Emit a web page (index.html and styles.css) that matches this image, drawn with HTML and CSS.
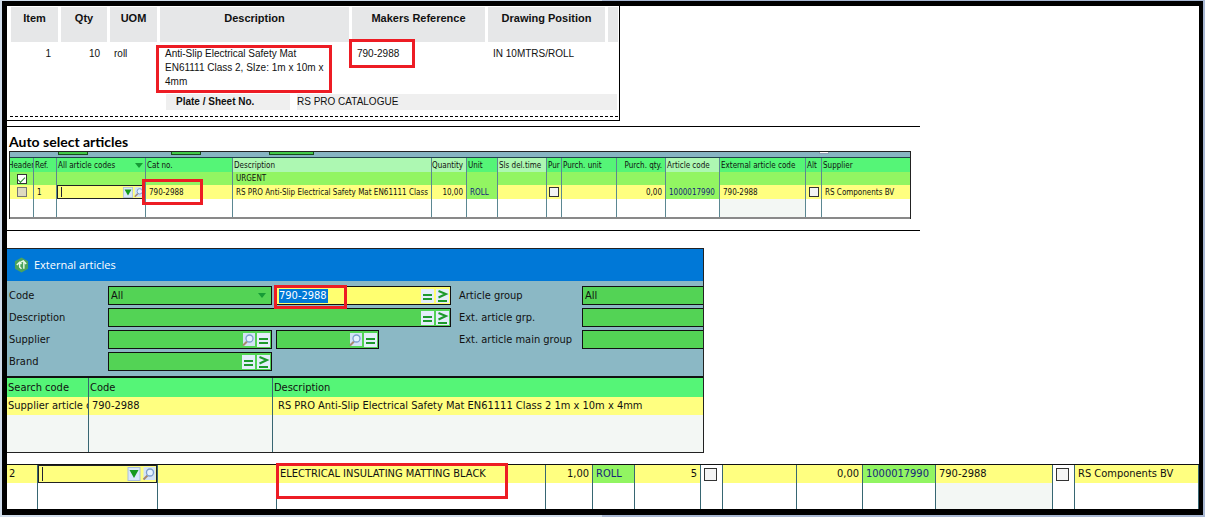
FILE: index.html
```html
<!DOCTYPE html>
<html lang="en">
<head>
<meta charset="utf-8">
<title>External articles</title>
<link rel="stylesheet" href="styles.css">
</head>
<body>
<svg class="defs" aria-hidden="true">
  <symbol id="lens" viewBox="0 0 13 14"><rect x="1" width="12" height="13" fill="#d3e3f7"/><path d="M1 12.500L5 8.500" stroke="#a8896f" stroke-width="2"/><circle cx="7.500" cy="5.500" r="3.500" fill="#e6f2ff" stroke="#7d9fce" stroke-width="1.300"/></symbol>
  <symbol id="eq" viewBox="0 0 13 14"><rect width="13" height="14" fill="#e4eefa"/><path d="M2 6H11M2 10H11" stroke="#1d9a2c" stroke-width="2"/></symbol>
  <symbol id="ge" viewBox="0 0 13 14"><rect width="13" height="14" fill="#e4eefa"/><path d="M2.500 2L10 5L2.500 8.500M2 12H11" fill="none" stroke="#1d9a2c" stroke-width="2"/></symbol>
  <symbol id="down" viewBox="0 0 13 14"><rect x=".5" y=".5" width="12" height="13" fill="#d9e8fa" stroke="#a9bfdc"/><path d="M2 3H11L6.500 11Z" fill="#149a1c"/></symbol>
</svg>
<main class="frame">
  <section class="doc">
    <table class="order">
      <colgroup><col class="o1"><col class="o2"><col class="o3"><col class="o4"><col class="o5"><col class="o6"><col></colgroup>
      <thead><tr><th>Item</th><th>Qty</th><th>UOM</th><th>Description</th><th>Makers Reference</th><th>Drawing Position</th><th></th></tr></thead>
      <tbody><tr><td class="num">1</td><td class="num">10</td><td>roll</td>
        <td>Anti-Slip Electrical Safety Mat<br>EN61111 Class 2, SIze: 1m x 10m x<br>4mm<i class="mark mark-desc"></i></td>
        <td>790-2988<i class="mark mark-ref"></i></td><td>IN 10MTRS/ROLL</td><td></td></tr></tbody>
    </table>
    <div class="plate"><b>Plate / Sheet No.</b><span>RS PRO CATALOGUE</span></div>
  </section>

  <section class="auto">
    <h1>Auto select articles</h1>
    <div class="grid-box">
      <div class="strip"><i></i><i></i><i></i><i></i></div>
      <table class="grid small">
        <colgroup><col class="a1"><col class="a2"><col class="a3"><col class="a4"><col class="a5"><col class="a6"><col class="a7"><col class="a8"><col class="a9"><col class="a10"><col class="a11"><col class="a12"><col class="a13"><col class="a14"><col></colgroup>
        <thead><tr><th class="cut"><span>Header</span></th><th>Ref.</th><th>All article codes<i class="arrow"></i></th><th>Cat no.</th><th class="pale">Description</th><th class="pale num">Quantity</th><th>Unit</th><th class="pale">Sls del.time</th><th>Pur</th><th>Purch. unit</th><th class="num">Purch. qty.</th><th class="pale">Article code</th><th>External article code</th><th>Alt</th><th>Supplier</th></tr></thead>
        <tbody>
          <tr class="head-row"><td class="mid"><input type="checkbox" checked aria-label="Header row"></td><td></td><td></td><td></td><td>URGENT</td><td></td><td></td><td></td><td></td><td></td><td></td><td></td><td></td><td></td><td></td></tr>
          <tr class="item"><td class="mid"><input class="dim" type="checkbox" aria-label="Header"></td><td>1</td><td class="entry-cell"><div class="entry"><input type="text" aria-label="Article code"><svg><use href="#down"/></svg><svg><use href="#lens"/></svg></div></td><td>790-2988<i class="mark mark-cat"></i></td><td>RS PRO Anti-Slip Electrical Safety Mat EN61111 Class</td><td class="num">10,00</td><td class="lime">ROLL</td><td></td><td class="mid"><input type="checkbox" aria-label="Purchase"></td><td></td><td class="num">0,00</td><td class="lime">1000017990</td><td>790-2988</td><td class="mid"><input type="checkbox" aria-label="Alternative"></td><td>RS Components BV</td></tr>
          <tr class="blank"><td></td><td></td><td></td><td></td><td></td><td></td><td></td><td></td><td></td><td></td><td></td><td></td><td class="gray"></td><td></td><td></td></tr>
        </tbody>
      </table>
    </div>
  </section>

  <section class="panel">
    <header><svg class="logo" viewBox="0 0 16 16"><path d="M8 0L15 4V12L8 16L1 12V4Z" fill="#4ba35b"/><path d="M3 8L6 5L8 7M6 5.500V10L8 12M7 5L10 3.500L13 7M10.500 4.500V12" fill="none" stroke="#e9fbe9" stroke-width="1.500"/></svg><h2>External articles</h2></header>
    <form>
      <label for="code">Code</label>
      <div class="fields">
        <div class="field w1"><select id="code"><option>All</option></select><i class="arrow"></i></div>
        <div class="field yellow grow"><input type="text" class="picked" value="790-2988" aria-label="Code value"><svg><use href="#eq"/></svg><svg><use href="#ge"/></svg><i class="mark mark-code"></i></div>
      </div>
      <label for="group">Article group</label>
      <div class="field open"><input id="group" type="text" value="All"></div>
      <label for="desc">Description</label>
      <div class="fields"><div class="field grow"><input id="desc" type="text"><svg><use href="#eq"/></svg><svg><use href="#ge"/></svg></div></div>
      <label for="egrp">Ext. article grp.</label>
      <div class="field open"><input id="egrp" type="text"></div>
      <label for="supp">Supplier</label>
      <div class="fields">
        <div class="field w1"><input id="supp" type="text"><svg><use href="#lens"/></svg><svg><use href="#eq"/></svg></div>
        <div class="field w2"><input type="text" aria-label="Supplier name"><svg><use href="#lens"/></svg><svg><use href="#eq"/></svg></div>
      </div>
      <label for="emain">Ext. article main group</label>
      <div class="field open"><input id="emain" type="text"></div>
      <label for="brand">Brand</label>
      <div class="fields"><div class="field w1"><input id="brand" type="text"><svg><use href="#eq"/></svg><svg><use href="#ge"/></svg></div></div>
    </form>
    <table class="grid results">
      <colgroup><col class="r1"><col class="r2"><col></colgroup>
      <thead><tr><th>Search code</th><th>Code</th><th>Description</th></tr></thead>
      <tbody><tr class="item"><td>Supplier article c</td><td>790-2988</td><td>RS PRO Anti-Slip Electrical Safety Mat EN61111 Class 2 1m x 10m x 4mm</td></tr>
      <tr class="blank"><td class="gray"></td><td class="gray"></td><td class="gray"></td></tr></tbody>
    </table>
  </section>

  <table class="grid line">
    <colgroup><col class="l1"><col class="l2"><col class="l3"><col class="l4"><col class="l5"><col class="l6"><col class="l7"><col class="l8"><col class="l9"><col class="l10"><col class="l11"><col class="l12"><col class="l13"><col></colgroup>
    <tbody>
      <tr class="item"><td>2</td><td class="entry-cell"><div class="entry"><input type="text" aria-label="Article code"><svg><use href="#down"/></svg><svg><use href="#lens"/></svg></div></td><td></td><td>ELECTRICAL INSULATING MATTING BLACK<i class="mark mark-line"></i></td><td class="num">1,00</td><td class="lime">ROLL</td><td class="num">5</td><td class="mid box"><input type="checkbox" aria-label="Purchase"></td><td></td><td class="num">0,00</td><td class="lime">1000017990</td><td>790-2988</td><td class="mid box"><input type="checkbox" aria-label="Alternative"></td><td>RS Components BV</td></tr>
      <tr class="blank"><td></td><td></td><td></td><td></td><td></td><td></td><td></td><td></td><td></td><td></td><td></td><td class="gray"></td><td></td><td></td></tr>
    </tbody>
  </table>
</main>
</body>
</html>
```
FILE: styles.css
```css
* { box-sizing: border-box; }
body {
  margin: 0;
  padding: 1px 2px 2px;
  background: linear-gradient(90deg, #d0dcea 50%, #a9b8d3 50%);
  font: 11px/14px "DejaVu Sans Condensed", "Noto Sans", sans-serif;
  color: #111;
}
.defs { position: absolute; width: 0; height: 0; }
.frame {
  display: flex;
  flex-direction: column;
  background: #fff;
  border: 5px solid #000;
  border-right-width: 4px;
  border-bottom-width: 6px;
}
table { border-collapse: separate; border-spacing: 0; table-layout: fixed; width: 100%; }
th, td { padding: 0; text-align: left; font-weight: normal; white-space: nowrap; position: relative; }
input, select { font: inherit; color: inherit; border: 0; padding: 0; margin: 0; background: transparent; min-width: 0; outline: 0; }
.mark { position: absolute; border: 3px solid #ed1c24; z-index: 2; }
.num { text-align: right; }

.doc {
  width: 51.400%;
  border: solid #000;
  border-width: 0 1px 1px 0;
  padding: 1px 1px 0 1px;
  font: 10px/14px "Liberation Sans", Arial, sans-serif;
}
.order th { height: 35px; padding-top: 4px; vertical-align: top; text-align: center; font-size: 11px; font-weight: bold; background: #e6e7e8; border-left: 3px solid #fff; }
.order td { height: 50px; padding: 5px 0 0 8px; vertical-align: top; }
.order td.num { padding-right: 7px; }
.order td:nth-child(3) { padding-left: 7px; }
.o1 { width: 50px; } .o2 { width: 49px; } .o3 { width: 50px; } .o4 { width: 192px; } .o5 { width: 136px; } .o6 { width: 120px; }
.mark-desc { left: -1px; top: 3px; width: 176px; height: 48px; }
.mark-ref { left: 0; top: -3px; width: 66px; height: 29px; }
.plate { display: flex; gap: 7px; margin: 2px 1px 6px 2px; padding: 0 0 0 156px; line-height: 16px; }
.plate b { width: 124px; padding-left: 10px; background: #efefef; }
.plate span { flex: 1; background: #efefef; }
.doc::after { content: ""; display: block; height: 1px; margin: 0 0 3px 2px; background: repeating-linear-gradient(90deg, #000 0 3px, transparent 3px 5px); }

.auto { width: 76.600%; margin-top: 5px; padding: 0 9px 11px 2px; border: solid #000; border-width: 1px 0; }
h1 { margin: 0; padding-top: 6px; font: bold 14px/18px Lato, "Noto Sans", sans-serif; color: #000; }
.grid-box { border: solid #222; border-width: 1px 1px 0; }
.strip { display: flex; height: 6px; background: #87b5c3; border-bottom: 1px solid #20414b; }
.strip i { width: 30px; height: 3px; margin-left: 48px; background: #43c84a; border: 1px solid #154d1a; border-top: 0; }
.strip i + i { margin-left: 83px; }
.strip i:nth-child(3) { margin-left: 68px; width: 45px; }
.strip i:nth-child(4) { margin-left: 505px; width: 10px; height: 2px; background: #fff; border-color: #8a9fb5; }

.grid th, .grid td { border-right: 1px solid #376672; padding-left: 3px; overflow: hidden; }
.grid th { background: #55f577; }
.grid th.pale { background: #adf8b2; }
.grid td:has(.mark) { overflow: visible; }
.item td { background: #ffff80; }
.item td.lime { background: #92f562; color: #17247a; }
.grid .gray { background: #f3f7f4; }
.grid .num { padding-right: 3px; }
.grid .mid { padding: 0; text-align: center; }
input[type="checkbox"] { appearance: none; width: 10px; height: 10px; border: 1px solid #333; background: #f4f4f4; vertical-align: middle; }
.small .dim { background: #dedac0; border-color: #777; }
input[type="checkbox"]:checked { display: inline-grid; place-items: center; background: #fff; }
input[type="checkbox"]:checked::before { content: ""; width: 6px; height: 3px; border: solid #278a2b; border-width: 0 0 1px 1px; transform: rotate(-45deg); }
.arrow { position: absolute; right: 2px; top: 5px; border: solid transparent; border-width: 5px 4px 0; border-top-color: #169b36; }

.small { font-size: 8px; line-height: 13px; border-bottom: 2px solid #898989; }
.small th { height: 14px; padding-left: 1px; }
.small td { height: 13px; }
.small .item td { height: 14px; }
.small .blank td { height: 18px; }
.small th, .small td { border-right-color: #5b8792; }
.small tr > :last-child, .results tr > :last-child { border-right: 0; }
.head-row td { background: #92f562; }
.cut span { display: block; margin-left: -3px; }
.small .num { padding-left: 0; }
.a1 { width: 24px; } .a2 { width: 23px; } .a3 { width: 89px; } .a4 { width: 87px; } .a5 { width: 199px; } .a6 { width: 35px; } .a7 { width: 31px; } .a8 { width: 49px; }
.a9 { width: 15px; } .a10 { width: 55px; } .a11 { width: 49px; } .a12 { width: 54px; } .a13 { width: 86px; } .a14 { width: 16px; }
.mark-cat { left: -4px; top: -6px; width: 61px; height: 26px; }
.grid .entry-cell { padding: 0; }
.entry { display: flex; align-items: center; gap: 1px; height: 14px; border: 1px solid #222; }
.entry input { flex: 1; height: 10px; background: linear-gradient(#223, #223) 3px 0 / 1px 100% no-repeat; }
.entry svg { width: 10px; height: 11px; }

.panel { width: 58.500%; margin-top: 17px; border: solid #222; border-width: 1px 1px 1px 0; }
.panel header { display: flex; align-items: center; gap: 5px; height: 32px; padding-left: 7px; background: #0078d7; }
.logo { width: 15px; height: 16px; }
h2 { margin: 0; font: 11px/16px "Open Sans", "Noto Sans", sans-serif; color: #fff; }
.panel form {
  display: grid;
  grid-template-columns: 99px 343px 131px 1fr;
  grid-auto-rows: 19px;
  row-gap: 3px;
  align-items: center;
  padding: 5px 0 5px 2px;
  background: #8bb8c5;
  border-bottom: 2px solid #111;
}
form label:nth-of-type(2n) { padding-left: 8px; }
.fields { display: flex; gap: 4px; }
.field { position: relative; display: flex; align-items: center; gap: 2px; height: 19px; padding: 0 1px 0 2px; background: #53d355; border: 1px solid #111; }
.field input { flex: 1; width: 20px; }
.field.yellow { background: #ffff70; }
.field.open { border-right: 0; }
.field svg { width: 13px; height: 14px; }
.field select { flex: 1; appearance: none; }
.field .arrow { right: 5px; top: 6px; }
.w1 { width: 164px; }
.w2 { width: 103px; }
.grow { flex: 1; }
.field .picked { color: #fff; background: linear-gradient(#0078d7, #0078d7) 0 0 / 49px 100% no-repeat; }
.mark-code { left: -3px; top: -2px; width: 73px; height: 24px; }
.results th { height: 19px; padding-left: 1px; }
.results td { height: 18px; }
.results .blank td { height: 37px; }
.results td:first-child { padding-left: 1px; }
.results td:last-child { padding-left: 5px; }
.r1 { width: 82px; } .r2 { width: 184px; }

.line { margin-top: 11px; border-top: 1px solid #111; }
.line .item td { height: 18px; }
.line .blank td { height: 26px; }
.line .entry { height: 18px; }
.line .entry svg { width: 14px; height: 14px; }
.line .entry input { height: 14px; }
.line input[type="checkbox"] { width: 13px; height: 13px; }
.line td:first-child { padding-left: 2px; }
.line .box { text-align: left; padding-left: 3px; }
.line .item .box { background: #fff; }
.l1 { width: 31px; } .l2 { width: 120px; } .l3 { width: 119px; } .l4 { width: 269px; } .l5 { width: 47px; } .l6 { width: 42px; } .l7 { width: 66px; }
.l8 { width: 22px; } .l9 { width: 74px; } .l10 { width: 66px; } .l11 { width: 73px; } .l12 { width: 117px; } .l13 { width: 22px; }
.mark-line { left: -1px; top: -2px; width: 232px; height: 36px; }
```
